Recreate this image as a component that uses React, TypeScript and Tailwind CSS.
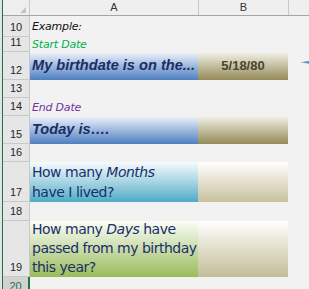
const rowHead =
  "w-[27px] shrink-0 flex items-end justify-center pb-[3px] text-[11px] leading-none border-b border-r border-[#c8c8c8] bg-[#e6e6e6] text-[#262626] font-['Liberation_Sans',Arial,sans-serif]";

const label = "flex items-center pl-[2px] text-[11px] leading-none italic font-['DejaVu_Sans',sans-serif] tracking-[-0.2px]";

function RowHead({ n }: { n: number }) {
  return <div className={rowHead}>{n}</div>;
}

function Arrow() {
  return (
    <svg className="absolute left-[298px] top-[58px]" width="11" height="8" viewBox="0 0 11 8">
      <defs>
        <linearGradient id="arr" x1="0" x2="1" y1="0" y2="0">
          <stop offset="0" stopColor="#c9dcf0" />
          <stop offset="1" stopColor="#2e75c6" />
        </linearGradient>
      </defs>
      <path d="M1 4.5 L11 3.2 L11 5.6 Z" fill="url(#arr)" />
      <path d="M3 4.3 L11 3 L11 4.2 Z" fill="#5b9bd5" />
    </svg>
  );
}

export default function App() {
  return (
    <div className="relative flex w-[309px] h-[289px] overflow-hidden bg-[#f2f2f2]">
      <div className="w-[2px] shrink-0 bg-[#e3e3e3]" />
      <div className="w-[1px] shrink-0 bg-[#217346]" />
      <div className="flex flex-col flex-1">
        {/* column headers */}
        <div className="flex h-[16px] shrink-0 border-b border-[#a6a6a6] bg-[#efefef] text-[11px] text-[#333] font-['Liberation_Sans',Arial,sans-serif]">
          <div className="relative w-[27px] shrink-0 border-r border-[#c8c8c8]">
            <div className="absolute right-[3px] bottom-[2px] w-0 h-0 border-l-[6px] border-l-transparent border-b-[6px] border-b-[#c3c3c3]" />
          </div>
          <div className="w-[168px] shrink-0 flex items-center justify-center">A</div>
          <div className="w-[90px] shrink-0 flex items-center justify-center border-l border-[#c8c8c8]">B</div>
          <div className="flex-1 border-l border-[#c8c8c8]" />
        </div>

        {/* 10 */}
        <div className="flex h-[21px] shrink-0">
          <RowHead n={10} />
          <div className={`${label} w-[168px] text-[#111]`}>Example:</div>
        </div>

        {/* 11 */}
        <div className="flex h-[15px] shrink-0">
          <RowHead n={11} />
          <div className={`${label} w-[168px] text-[#00b050]`}>Start Date</div>
        </div>

        {/* 12 */}
        <div className="flex h-[28px] shrink-0">
          <RowHead n={12} />
          <div className="w-[168px] shrink-0 flex items-center overflow-hidden whitespace-nowrap pl-[2px] bg-gradient-to-b from-[#f0f4fa] to-[#4f7fc0] text-[14.6px] font-bold italic text-[#1c2d66] font-['Liberation_Sans',Arial,sans-serif]">
            My birthdate is on the...
          </div>
          <div className="w-[90px] shrink-0 flex items-center justify-center bg-gradient-to-b from-[#f4f2ea] to-[#958b58] text-[13px] font-bold text-[#4a452f] font-['Liberation_Sans',Arial,sans-serif]">
            5/18/80
          </div>
        </div>

        {/* 13 */}
        <div className="flex h-[18px] shrink-0">
          <RowHead n={13} />
        </div>

        {/* 14 */}
        <div className="flex h-[18px] shrink-0">
          <RowHead n={14} />
          <div className={`${label} w-[168px] text-[#7030a0]`}>End Date</div>
        </div>

        {/* 15 */}
        <div className="flex h-[28px] shrink-0">
          <RowHead n={15} />
          <div className="w-[168px] shrink-0 flex items-center pl-[2px] bg-gradient-to-b from-[#f0f4fa] to-[#4f7fc0] text-[14.6px] font-bold italic text-[#1c2d66] font-['Liberation_Sans',Arial,sans-serif]">
            Today is….
          </div>
          <div className="w-[90px] shrink-0 bg-gradient-to-b from-[#f4f2ea] to-[#958b58]" />
        </div>

        {/* 16 */}
        <div className="flex h-[18px] shrink-0">
          <RowHead n={16} />
        </div>

        {/* 17 */}
        <div className="flex h-[40px] shrink-0">
          <RowHead n={17} />
          <div className="w-[168px] shrink-0 flex flex-col justify-end pl-[2px] whitespace-nowrap bg-gradient-to-b from-[#f6fbfd] to-[#4bacc6] text-[14px] leading-[20px] text-[#1a2f6b] font-['DejaVu_Sans',sans-serif] tracking-[-0.5px]">
            <span>
              How many <i>Months</i>
            </span>
            <span>have I lived?</span>
          </div>
          <div className="w-[90px] shrink-0 bg-gradient-to-b from-[#ffffff] to-[#c8c09c]" />
        </div>

        {/* 18 */}
        <div className="flex h-[19px] shrink-0">
          <RowHead n={18} />
        </div>

        {/* 19 */}
        <div className="flex h-[56px] shrink-0">
          <RowHead n={19} />
          <div className="w-[168px] shrink-0 flex flex-col justify-end pl-[2px] whitespace-nowrap bg-gradient-to-b from-[#fbfdf6] to-[#9bbb59] text-[14px] leading-[19px] text-[#1a2f6b] font-['DejaVu_Sans',sans-serif] tracking-[-0.5px]">
            <span>
              How many <i>Days</i> have
            </span>
            <span>passed from my birthday</span>
            <span>this year?</span>
          </div>
          <div className="w-[90px] shrink-0 bg-gradient-to-b from-[#ffffff] to-[#c4bd97]" />
        </div>

        {/* 20 */}
        <div className="flex flex-1">
          <div className="w-[27px] shrink-0 flex items-start justify-center pt-[4px] border-r-2 border-[#217346] bg-[#d2d2d2] text-[11px] leading-none text-[#217346] font-['Liberation_Sans',Arial,sans-serif]">
            20
          </div>
        </div>
      </div>
      <Arrow />
    </div>
  );
}
